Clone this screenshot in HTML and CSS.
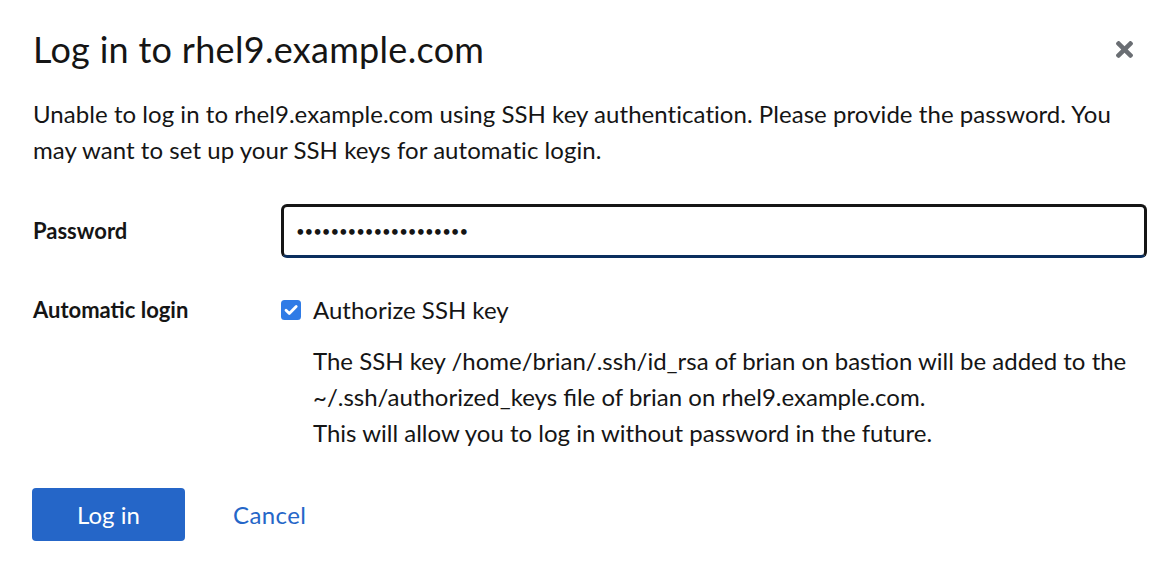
FILE: index.html
```html
<!DOCTYPE html>
<html lang="en">
<head>
<meta charset="utf-8">
<title>Log in to rhel9.example.com</title>
<link rel="stylesheet" href="styles.css">
</head>
<body>
<div class="modal">
  <header class="modal-header">
    <h1 class="modal-title">Log in to rhel9.example.com</h1>
    <button class="close-btn" aria-label="Close">
      <svg viewBox="0 80 352 352" width="17" height="17" aria-hidden="true"><path fill="currentColor" d="M242.72 256l100.07-100.07c12.28-12.28 12.28-32.19 0-44.48l-22.24-22.240c-12.28-12.280-32.190-12.280-44.480 0L176 189.28 75.93 89.21c-12.28-12.28-32.19-12.28-44.48 0L9.21 111.45c-12.28 12.28-12.28 32.19 0 44.48L109.28 256 9.21 356.07c-12.28 12.28-12.28 32.19 0 44.48l22.24 22.24c12.28 12.28 32.2 12.28 44.48 0L176 322.72l100.07 100.07c12.28 12.28 32.2 12.28 44.48 0l22.24-22.24c12.28-12.280 12.28-32.19 0-44.48L242.72 256z"/></svg>
    </button>
  </header>
  <p class="modal-desc">Unable to log in to rhel9.example.com using SSH key authentication. Please provide the password. You may want to set up your SSH keys for automatic login.</p>
  <form class="form">
    <label class="form-label" for="pw">Password</label>
    <div class="form-field">
      <div class="input" id="pw">••••••••••••••••••••</div>
    </div>
    <span class="form-label auto">Automatic login</span>
    <div class="form-field">
      <label class="check">
        <span class="check-box"><svg viewBox="0 0 20 20" width="20" height="20" aria-hidden="true"><rect width="20" height="20" rx="3.5" fill="#2f7be6"/><path d="M5 10.3l3.3 3.3L15.2 6.5" fill="none" stroke="#fff" stroke-width="2.8" stroke-linecap="round" stroke-linejoin="round"/></svg></span>
        <span class="check-text">Authorize SSH key</span>
      </label>
      <div class="check-desc">
        <p>The SSH key /home/brian/.ssh/id_rsa of brian on bastion will be added to the ~/.ssh/authorized_keys file of brian on rhel9.example.com.</p>
        <p>This will allow you to log in without password in the future.</p>
      </div>
    </div>
  </form>
  <footer class="modal-footer">
    <button class="btn-primary">Log in</button>
    <button class="btn-link">Cancel</button>
  </footer>
</div>
</body>
</html>
```

FILE: styles.css
```css
* { box-sizing: border-box; }
html, body {
  margin: 0;
  padding: 0;
  background: #fff;
}
body {
  font-family: "Lato", "Noto Sans", sans-serif;
  color: #151515;
  font-size: 24px;
  line-height: 36px;
}
.modal {
  width: 1173px;
  height: 576px;
  padding: 25px 26px 0 33px;
}
.modal-header {
  display: flex;
  align-items: center;
  justify-content: space-between;
}
.modal-title {
  margin: 0;
  font-size: 36px;
  line-height: 48px;
  font-weight: 400;
  letter-spacing: 0.3px;
}
.close-btn {
  border: 0;
  background: none;
  padding: 0;
  margin-right: 14px;
  color: #6a6e73;
  display: flex;
}
.modal-desc {
  margin: 23px 0 0;
  letter-spacing: 0.05px;
}
.form {
  display: grid;
  grid-template-columns: 248px 1fr;
  row-gap: 34px;
  margin-top: 36px;
  align-items: start;
}
.form-label {
  font-weight: 700;
  font-size: 22px;
  line-height: 54px;
}
.form-label.auto {
  line-height: 36px;
}
.input {
  height: 54px;
  border: 3px solid #151515;
  border-bottom-color: #0b2f5e;
  border-radius: 6px;
  padding: 0 12px;
  font-size: 15px;
  letter-spacing: -0.1px;
  display: flex;
  align-items: center;
}
.check {
  display: flex;
  align-items: center;
  gap: 12px;
}
.check-box {
  display: flex;
  width: 20px;
  height: 20px;
}
.check-desc {
  margin: 15px 0 0 32px;
}
.check-desc p {
  margin: 0;
}
.modal-footer {
  display: flex;
  align-items: center;
  gap: 24px;
  margin-top: 37px;
}
.btn-primary {
  font-family: inherit;
  font-size: 24px;
  line-height: 36px;
  background: #2566c8;
  color: #fff;
  border: 0;
  border-radius: 4px;
  width: 153px;
  height: 53px;
  margin-left: -1px;
}
.btn-link {
  font-family: inherit;
  font-size: 24px;
  line-height: 36px;
  background: none;
  border: 0;
  color: #2566c8;
  padding: 0 24px;
  letter-spacing: 0.4px;
}
```
